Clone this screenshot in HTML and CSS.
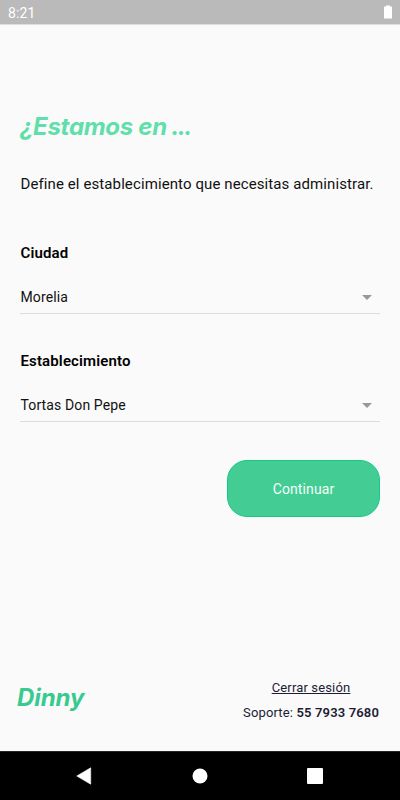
FILE: index.html
```html
<!DOCTYPE html>
<html lang="es">
<head>
    <meta charset="UTF-8">
    <meta name="viewport" content="width=device-width, initial-scale=1.0">
    <title>Dinny</title>
    <link rel="stylesheet" href="styles.css">
</head>
<body>
    <header class="status">
        <span class="hora">8:21</span>
        <svg class="bateria" width="8" height="14" viewBox="0 0 8 14">
            <path d="M2 0.5h4v1h1.4a.6.6 0 0 1 .6.6v10.8a.6.6 0 0 1-.6.6H.6a.6.6 0 0 1-.6-.6V2.100a.6.6 0 0 1 .6-.6H2z" fill="#fff"/>
        </svg>
    </header>

    <main>
        <h1>¿Estamos en <span class="puntos">...</span></h1>
        <p class="intro">Define el establecimiento que necesitas administrar.</p>

        <section class="campo">
            <h2>Ciudad</h2>
            <div class="select">
                <span class="valor">Morelia</span>
                <svg class="flecha" width="10" height="5" viewBox="0 0 10 5"><path d="M0 0h10L5 5z" fill="#989898"/></svg>
            </div>
        </section>

        <section class="campo">
            <h2>Establecimiento</h2>
            <div class="select">
                <span class="valor">Tortas Don Pepe</span>
                <svg class="flecha" width="10" height="5" viewBox="0 0 10 5"><path d="M0 0h10L5 5z" fill="#989898"/></svg>
            </div>
        </section>

        <button type="button" class="continuar">Continuar</button>
    </main>

    <footer>
        <div class="logo">Dinny</div>
        <div class="ayuda">
            <a class="cerrar">Cerrar sesión</a>
            <p class="soporte">Soporte: <b>55 7933 7680</b></p>
        </div>
    </footer>

    <nav>
        <svg width="16" height="18" viewBox="1 0 16 18"><path d="M14.700 .8v16.400L.8 9z" fill="#fff" stroke="#fff" stroke-width=".6" stroke-linejoin="round" overflow="visible"/></svg>
        <svg width="16" height="16" viewBox="0 0 16 16"><circle cx="8" cy="8" r="7.500" fill="#fff"/></svg>
        <svg width="16" height="16" viewBox="0 0 16 16"><rect width="16" height="16" rx="1" fill="#fff"/></svg>
    </nav>
</body>
</html>
```

FILE: styles.css
```css
*
{
    box-sizing: border-box;
    margin: 0;
    padding: 0;
}
body
{
    display: flex;
    flex-direction: column;
    height: 100vh;
    overflow: hidden;
    background-color: #fafafa;
    color: #111;
    font-family: Roboto, sans-serif;
}
svg
{
    display: block;
    overflow: visible;
}
.status
{
    display: flex;
    justify-content: space-between;
    height: 25px;
    padding: 5px 8px 0;
    background-color: #bababa;
    border-bottom: 1px solid #dedede;
    color: #fff;
}
.hora
{
    font-size: 14px;
    line-height: 17px;
    letter-spacing: 0.1px;
}
main
{
    display: flex;
    flex-direction: column;
    flex: 1;
    padding: 87px 20px 0;
}
h1, .logo
{
    font-family: Inter, sans-serif;
    font-weight: 700;
    font-style: italic;
    font-size: 24px;
    line-height: 30px;
    white-space: nowrap;
}
h1
{
    color: #60dfaa;
    letter-spacing: -0.3px;
}
.puntos
{
    margin-left: -1px;
    letter-spacing: -1.5px;
}
.intro
{
    margin-top: 32px;
    padding-left: 0.5px;
    font-size: 15px;
    line-height: 20px;
    letter-spacing: 0.1px;
    white-space: nowrap;
}
.campo
{
    height: 108px;
}
.intro + .campo
{
    margin-top: 49px;
}
h2
{
    padding-left: 0.5px;
    font-size: 15px;
    font-weight: 600;
    line-height: 20px;
    letter-spacing: 0.13px;
    color: #000;
}
.select
{
    display: flex;
    justify-content: space-between;
    align-items: center;
    height: 33px;
    margin-top: 18px;
    padding: 0 8px 0 0.5px;
    border-bottom: 1px solid #dcdcdc;
}
.valor
{
    font-size: 14px;
    line-height: 20px;
    letter-spacing: 0.12px;
}
.continuar
{
    align-self: flex-end;
    width: 153px;
    height: 57px;
    margin-top: 1px;
    border: 1px solid #14cb86;
    border-radius: 20px;
    background-color: #43cd95;
    color: #f4fffa;
    font-family: inherit;
    font-size: 14px;
    letter-spacing: 0.1px;
}
footer
{
    display: flex;
    justify-content: space-between;
    height: 73px;
    padding: 0 21px 0 17px;
    color: #1d1d35;
}
.logo
{
    margin-top: 5px;
    color: #36ca90;
    letter-spacing: -0.1px;
}
.ayuda
{
    display: flex;
    flex-direction: column;
    align-items: center;
    font-size: 13px;
    line-height: 20px;
    letter-spacing: 0.15px;
    white-space: nowrap;
}
.cerrar
{
    text-decoration: underline;
}
.soporte
{
    margin-top: 5px;
}
.soporte b
{
    font-weight: 600;
}
nav
{
    display: grid;
    grid-template-columns: repeat(3, 16px);
    justify-content: center;
    align-items: center;
    column-gap: 99px;
    height: 49px;
    background-color: #000;
    border-top: 1px solid #252525;
}
```
